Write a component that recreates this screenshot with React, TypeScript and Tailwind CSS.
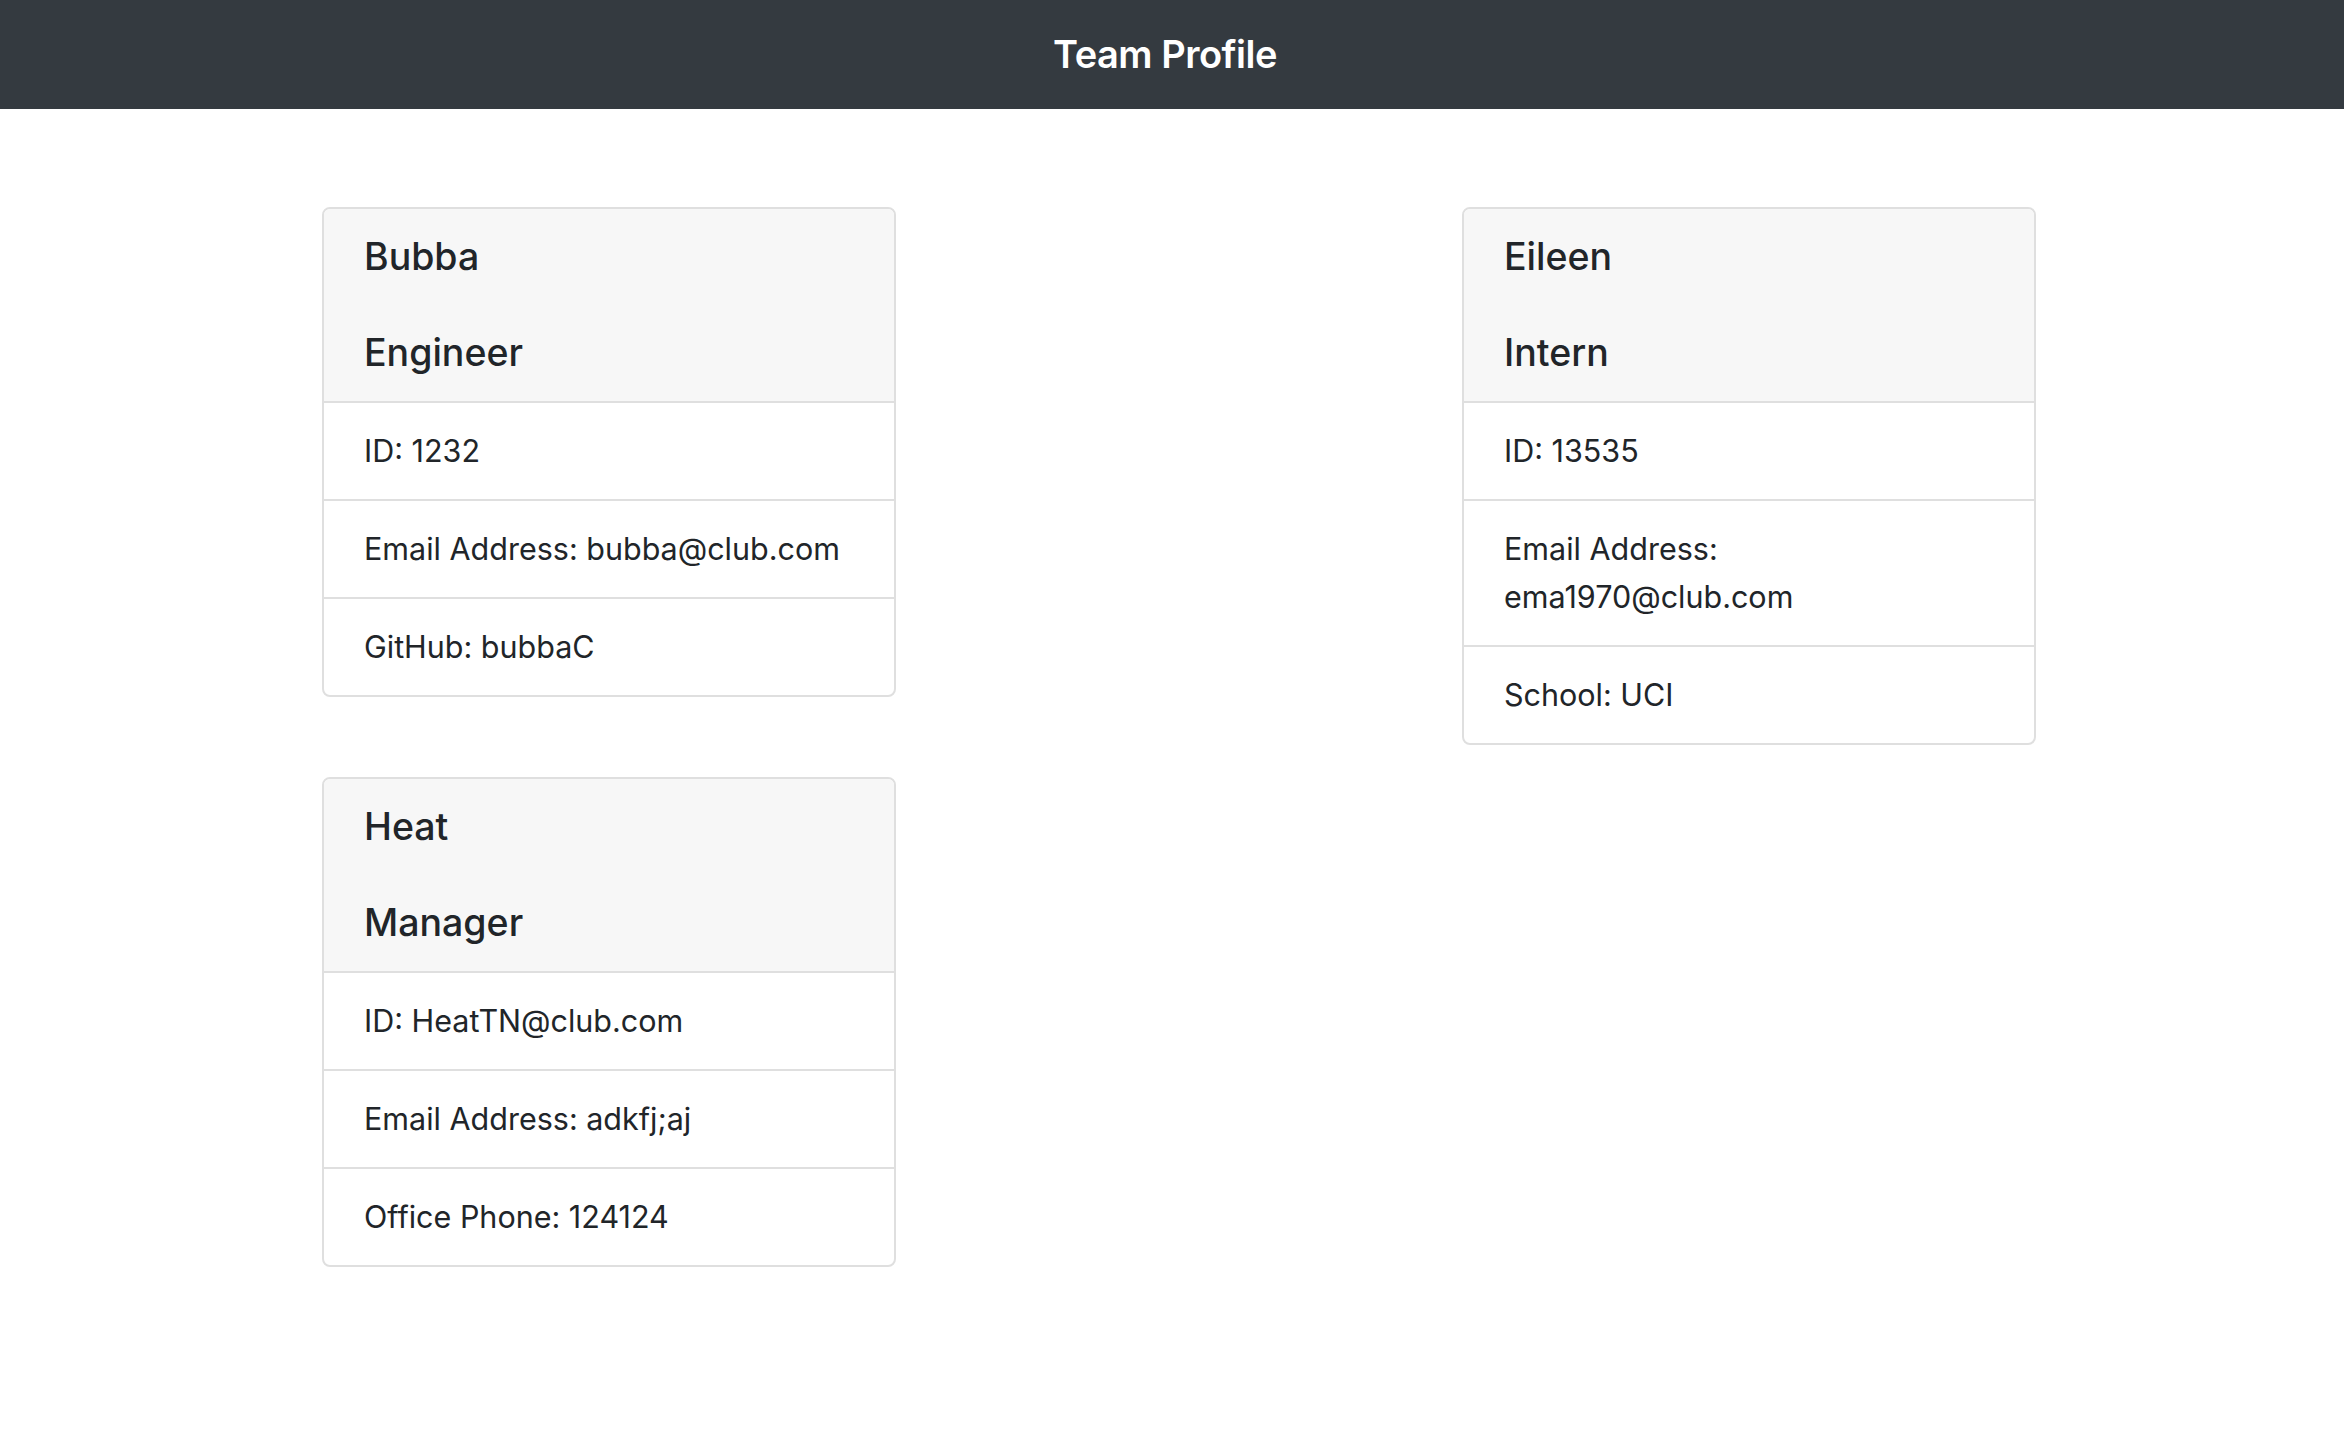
import React from 'react';

type Member = {
  name: string;
  role: string;
  rows: string[];
};

const leftColumn: Member[] = [
  {
    name: 'Bubba',
    role: 'Engineer',
    rows: ['ID: 1232', 'Email Address: bubba@club.com', 'GitHub: bubbaC'],
  },
  {
    name: 'Heat',
    role: 'Manager',
    rows: ['ID: HeatTN@club.com', 'Email Address: adkfj;aj', 'Office Phone: 124124'],
  },
];

const rightColumn: Member[] = [
  {
    name: 'Eileen',
    role: 'Intern',
    rows: ['ID: 13535', 'Email Address: ema1970@club.com', 'School: UCI'],
  },
];

const MemberCard: React.FC<{ member: Member }> = ({ member }) => (
  <div className="w-[574px] border-2 border-[#dfdfdf] rounded-[8px] overflow-hidden bg-white">
    <div className="bg-[#f7f7f7] px-[40px] py-[24px]">
      <h5 className="text-[37.5px] leading-[48px] font-medium mb-[48px]">{member.name}</h5>
      <h5 className="text-[37.5px] leading-[48px] font-medium">{member.role}</h5>
    </div>
    <ul>
      {member.rows.map((row) => (
        <li key={row} className="border-t-2 border-[#dfdfdf] px-[40px] py-[24px] text-[30.5px] leading-[48px]">
          {row}
        </li>
      ))}
    </ul>
  </div>
);

export default function App() {
  return (
    <div className="min-h-screen bg-white text-[#212529]" style={{ fontFamily: 'Inter, "Noto Sans", sans-serif' }}>
      <nav className="h-[109px] bg-[#343a40] flex items-center justify-center pr-[14px]">
        <span className="text-white text-[38px] font-semibold tracking-[-0.5px]">Team Profile</span>
      </nav>
      <div className="w-[2280px] ml-[39px] grid grid-cols-2 pt-[98px]">
        <div className="flex flex-col items-center gap-[80px]">
          {leftColumn.map((m) => (
            <MemberCard key={m.name} member={m} />
          ))}
        </div>
        <div className="flex flex-col items-center gap-[80px]">
          {rightColumn.map((m) => (
            <MemberCard key={m.name} member={m} />
          ))}
        </div>
      </div>
    </div>
  );
}
